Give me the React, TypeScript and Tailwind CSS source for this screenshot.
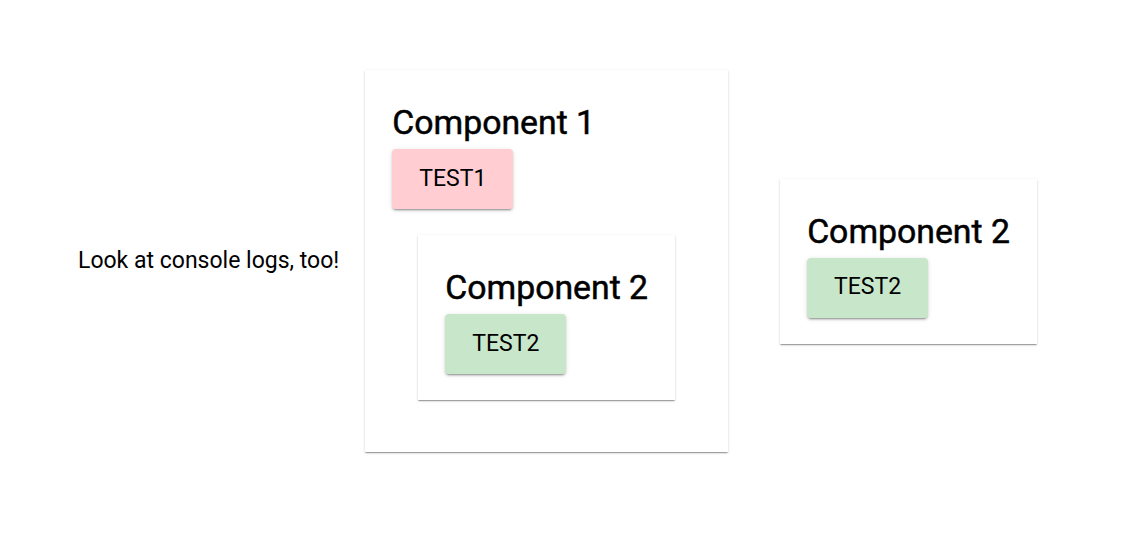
function TestButton({ label, color }: { label: string; color: string }) {
  return (
    <button
      className={`h-[60px] w-[121px] rounded-[4px] text-[23px] text-black ${color} shadow-[0_3px_1px_-2px_rgba(0,0,0,0.2),0_2px_2px_0_rgba(0,0,0,0.14),0_1px_5px_0_rgba(0,0,0,0.12)]`}
    >
      {label}
    </button>
  );
}

function Card({ title, children }: { title: string; children: React.ReactNode }) {
  return (
    <div className="m-[26px] bg-white px-[27px] pt-[27px] pb-[26px] shadow-[0_2px_1px_-1px_rgba(0,0,0,0.2),0_1px_1px_0_rgba(0,0,0,0.14),0_1px_3px_0_rgba(0,0,0,0.12)]">
      <h1 className="mt-[7px] mb-[7px] text-[33.8px] leading-[38px] font-normal text-black whitespace-nowrap [-webkit-text-stroke:0.5px_black]">
        {title}
      </h1>
      {children}
    </div>
  );
}

export default function App() {
  return (
    <div className="flex items-start pt-[44px] pl-[78px] font-['Roboto',sans-serif] bg-white min-h-[542px]">
      <div className="flex items-center">
        <p className="text-[23px] text-black whitespace-nowrap">Look at console logs, too!</p>
        <Card title="Component 1">
          <TestButton label="TEST1" color="bg-[#ffcdd2]" />
          <Card title="Component 2">
            <TestButton label="TEST2" color="bg-[#c8e6c9]" />
          </Card>
        </Card>
        <Card title="Component 2">
          <TestButton label="TEST2" color="bg-[#c8e6c9]" />
        </Card>
      </div>
    </div>
  );
}
